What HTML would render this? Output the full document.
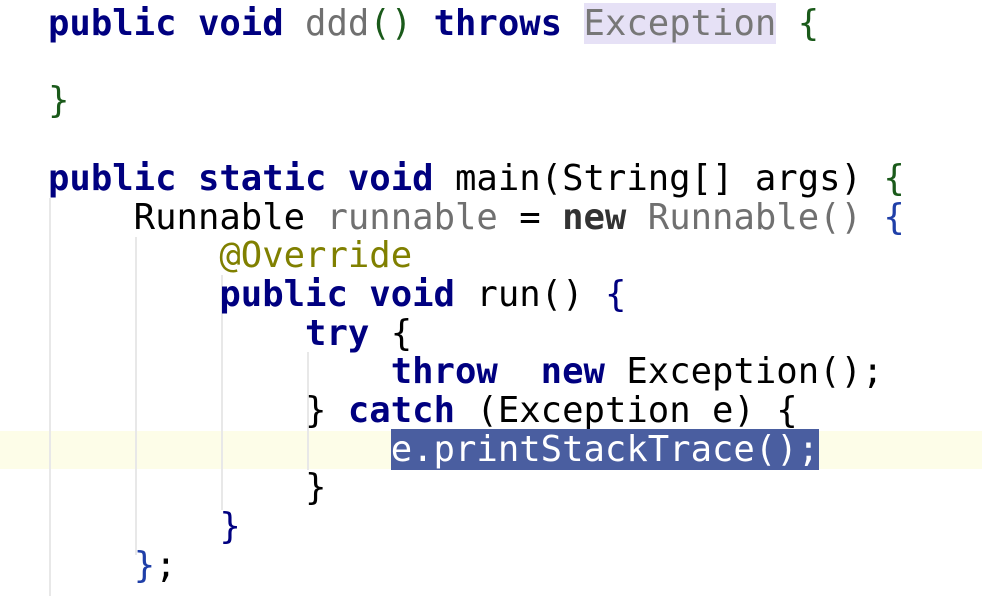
<!DOCTYPE html>
<html><head><style>
body{margin:0;width:982px;height:596px;background:#fff;overflow:hidden;position:relative}
pre{position:absolute;left:48px;top:5px;margin:0;font-family:"DejaVu Sans Mono","Liberation Mono",monospace;font-size:35.6px;line-height:38.7px;color:#000;z-index:2}
.k{color:#000080;font-weight:bold}
.g{color:#707070}
.a{color:#808000}
.gr{color:#1a5a1a}
.bl{color:#1f3fa8}
.ex{background:#e6e1f6;color:#777}
.sel{background:#4a5ea0;color:#fff}
.guide{position:absolute;width:2px;background:#e8e8e8;z-index:1}
.cur{position:absolute;left:0;top:431px;width:982px;height:38px;background:#fdfde8;z-index:0}
</style></head><body>
<div class="cur"></div>
<div class="guide" style="left:49px;top:198px;height:398px"></div>
<div class="guide" style="left:135px;top:237px;height:318px"></div>
<div class="guide" style="left:221px;top:275px;height:235px"></div>
<div class="guide" style="left:307px;top:352px;height:118px"></div>
<pre><span class="k">public void</span> <span class="g">ddd</span><span class="gr">()</span> <span class="k">throws</span> <span class="ex">Exception</span> <span class="gr">{</span>

<span class="gr">}</span>

<span class="k">public static void</span> main(String[] args) <span class="gr">{</span>
    Runnable <span class="g">runnable</span> = <span class="k" style="color:#333">new</span> <span class="g">Runnable()</span> <span class="bl">{</span>
        <span class="a">@Override</span>
        <span class="k">public void</span> run() <span class="k" style="font-weight:normal">{</span>
            <span class="k">try</span> {
                <span class="k">throw</span>  <span class="k">new</span> Exception();
            } <span class="k">catch</span> (Exception e) {
                <span class="sel">e.printStackTrace();</span>
            }
        <span class="k" style="font-weight:normal">}</span>
    <span class="bl">}</span>;</pre>
</body></html>
